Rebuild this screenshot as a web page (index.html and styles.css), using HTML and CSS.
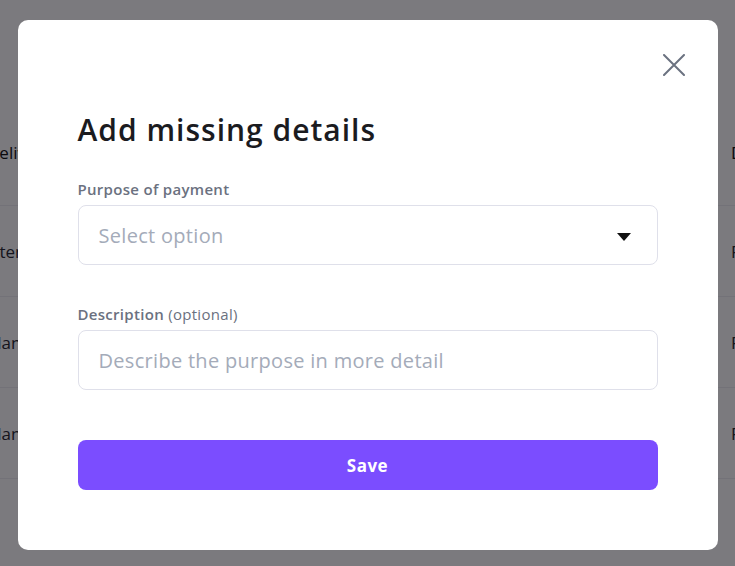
FILE: index.html
```html
<!DOCTYPE html>
<html lang="en">
<head>
    <meta charset="UTF-8">
    <meta name="viewport" content="width=device-width, initial-scale=1.0">
    <title>Add missing details</title>
    <link rel="stylesheet" href="styles.css">
</head>
<body>
    <div class="page">
        <div class="table-row table-head">
            <span class="cell-left">Delivery</span>
            <span class="cell-right">Date</span>
        </div>
        <div class="table-row">
            <span class="cell-left">Utensils</span>
            <span class="cell-right">Fee</span>
        </div>
        <div class="table-row">
            <span class="cell-left">Plan</span>
            <span class="cell-right">Fee</span>
        </div>
        <div class="table-row">
            <span class="cell-left">Plan</span>
            <span class="cell-right">Fee</span>
        </div>
    </div>

    <div class="overlay">
        <div class="modal">
            <button class="close-btn" aria-label="Close">
                <svg width="22" height="22" viewBox="0 0 22 22" fill="none">
                    <path d="M1 1L21 21M21 1L1 21" stroke="#6b7280" stroke-width="2" stroke-linecap="round"/>
                </svg>
            </button>
            <h2 class="modal-title">Add missing details</h2>
            <form>
                <div class="form-group">
                    <label for="purpose">Purpose of payment</label>
                    <div class="select-box" id="purpose">
                        <span class="placeholder">Select option</span>
                        <span class="caret"></span>
                    </div>
                </div>
                <div class="form-group">
                    <label for="description">Description <span class="optional">(optional)</span></label>
                    <input type="text" id="description" placeholder="Describe the purpose in more detail">
                </div>
                <button type="button" class="save-btn">Save</button>
            </form>
        </div>
    </div>
</body>
</html>
```

FILE: styles.css
```css
body {
    margin: 0;
    font-family: "Open Sans", Arial, sans-serif;
    background-color: #ffffff;
    overflow: hidden;
}
.page {
    padding-top: 100px;
    margin-left: -13px;
    width: 757px;
}
.table-row {
    display: flex;
    justify-content: space-between;
    align-items: center;
    height: 90px;
    border-bottom: 1px solid #eeeef2;
    font-size: 17px;
    color: #2a2a33;
}
.table-head {
    height: 105px;
    font-weight: 500;
    color: #111;
}
.cell-right {
    width: 13px;
    overflow: hidden;
    white-space: nowrap;
}
.overlay {
    position: fixed;
    inset: 0;
    background: rgba(6, 4, 12, 0.53);
    display: flex;
    justify-content: center;
    align-items: center;
}
.modal {
    position: relative;
    width: 700px;
    box-sizing: border-box;
    padding: 90px 60px 60px;
    margin-top: 4px;
    background: #ffffff;
    border-radius: 10px;
}
.close-btn {
    position: absolute;
    top: 34px;
    right: 33px;
    padding: 0;
    border: none;
    background: none;
    cursor: pointer;
    line-height: 0;
}
.modal-title {
    margin: 0 0 29px;
    font-size: 30px;
    line-height: 40px;
    font-weight: 600;
    letter-spacing: 1px;
    color: #1b1b1f;
}
.form-group {
    margin-bottom: 39px;
}
.form-group label {
    display: block;
    margin-bottom: 6px;
    font-size: 15px;
    line-height: 20px;
    font-weight: 600;
    letter-spacing: 0.3px;
    color: #6b7180;
}
.form-group .optional {
    font-weight: 400;
}
.select-box,
input {
    display: flex;
    align-items: center;
    justify-content: space-between;
    width: 100%;
    height: 60px;
    box-sizing: border-box;
    padding: 0 26px 0 20px;
    border: 1px solid #dfe0ea;
    border-radius: 8px;
    font-family: inherit;
    font-size: 20px;
    letter-spacing: 0.3px;
    color: #a4abb9;
}
input::placeholder {
    color: #a4abb9;
}
.caret {
    width: 0;
    height: 0;
    margin-top: 3px;
    border-left: 7px solid transparent;
    border-right: 7px solid transparent;
    border-top: 8px solid #111;
}
.form-group:last-of-type {
    margin-bottom: 50px;
}
.save-btn {
    display: block;
    width: 100%;
    height: 50px;
    border: none;
    border-radius: 8px;
    background-color: #7b4dff;
    color: #ffffff;
    font-family: inherit;
    font-size: 17px;
    font-weight: 700;
    letter-spacing: 0.5px;
    cursor: pointer;
}
```
